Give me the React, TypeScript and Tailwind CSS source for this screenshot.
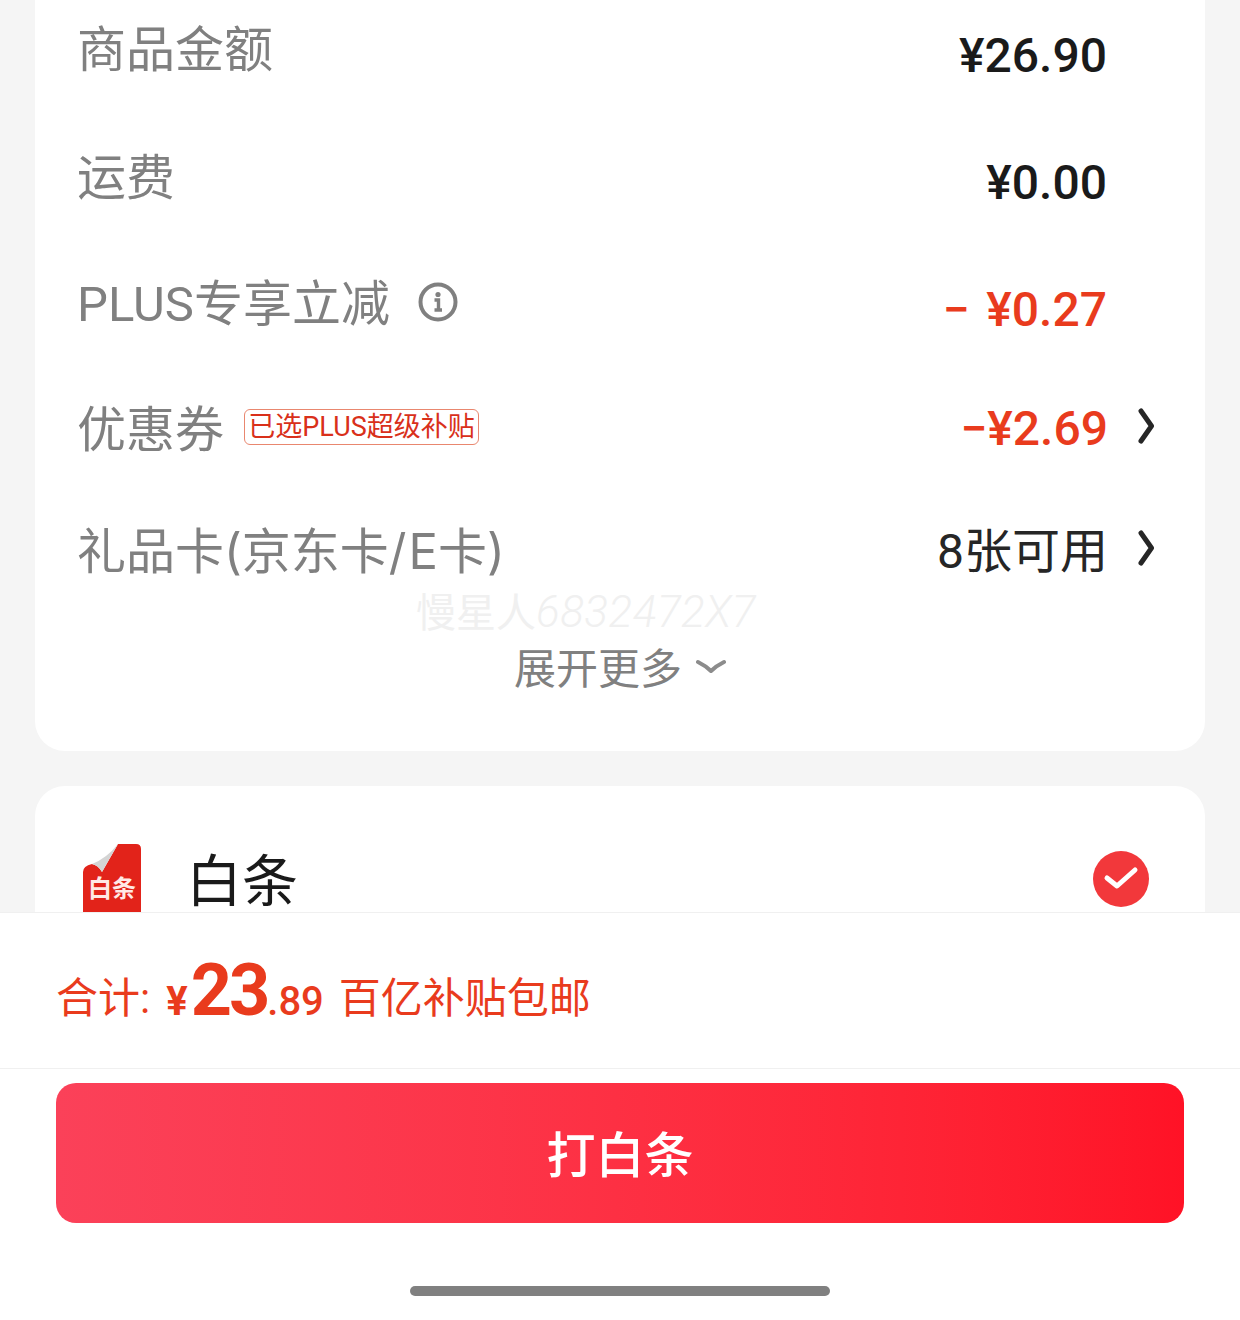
const CJK = 'font-["Roboto","Noto_Sans_CJK_SC",sans-serif]'

function Chevron({ className = '' }: { className?: string }) {
  return (
    <svg width="18" height="36" viewBox="0 0 18 36" fill="none" className={`ml-[30px] shrink-0 ${className}`}>
      <path d="M3 3 L13.5 18 L3 33" stroke="#262626" strokeWidth="5" strokeLinecap="round" strokeLinejoin="round" />
    </svg>
  )
}

function InfoIcon() {
  return (
    <svg width="40" height="40" viewBox="0 0 40 40" fill="none" className="ml-[28px] mt-[-6px]">
      <circle cx="20" cy="20" r="17.5" stroke="#808080" strokeWidth="4" />
      <circle cx="20" cy="12.5" r="2.6" fill="#808080" />
      <path d="M16.5 18 H20.5 V27.5 M16.5 28 H24" stroke="#808080" strokeWidth="3.4" />
    </svg>
  )
}

function BaitiaoLogo() {
  return (
    <svg width="58" height="68" viewBox="0 0 58 68" className="shrink-0">
      <path d="M35 0 H53 Q58 0 58 5 V68 H0 V28 Q0 22 9 20 Q15 21 19 28 Z" fill="#e2231a" />
      <path d="M35 0 L19 28 Q15 21 9 20 Q24 14 35 0 Z" fill="#d4d4d4" />
      <text x="29" y="53" textAnchor="middle" fontSize="24" fontWeight="700" fill="#ffe9e6" fontFamily="Noto Sans CJK SC, sans-serif">白条</text>
    </svg>
  )
}

function Row({ label, value, center }: { label: React.ReactNode; value: React.ReactNode; center: string }) {
  return (
    <div className={`flex items-center justify-between ${center}`}>
      <div className="flex items-center text-[49px] leading-[64px] text-[#808080]">{label}</div>
      {value}
    </div>
  )
}

export default function App() {
  return (
    <div className={`flex h-[1320px] w-[1240px] flex-col overflow-hidden bg-white ${CJK}`}>
      <div className="h-[912px] shrink-0 overflow-hidden bg-[#f5f5f5] px-[35px]">
        <div className="relative mt-[-40px] h-[791px] rounded-[30px] bg-white pl-[42px]">
          <div className="flex flex-col pt-[59px]">
            <Row
              center="h-[64px] mb-[64px]"
              label="商品金额"
              value={<span className="mr-[98px] mt-[10px] text-[48px] font-medium leading-[64px] text-[#1a1a1a]">¥26.90</span>}
            />
            <Row
              center="h-[64px] mb-[62px]"
              label="运费"
              value={<span className="mr-[98px] mt-[8px] text-[48px] font-medium leading-[64px] text-[#1a1a1a]">¥0.00</span>}
            />
            <Row
              center="h-[64px] mb-[62px]"
              label={<>PLUS专享立减<InfoIcon /></>}
              value={
                <span className="mr-[98px] mt-[10px] text-[48px] font-medium leading-[64px] text-[#e93b1d]">
                  <span className="mr-[5px]">−</span>&nbsp;¥0.27
                </span>
              }
            />
            <Row
              center="h-[64px] mb-[57px]"
              label={
                <>
                  优惠券
                  <span className="ml-[20px] mt-[-8px] flex h-[36px] w-[235px] items-center justify-center whitespace-nowrap rounded-[6px] border border-[#e9876f] text-[27px] leading-none text-[#d9301a]">
                    已选PLUS超级补贴
                  </span>
                </>
              }
              value={
                <div className="mr-[49px] mt-[-4px] flex items-center">
                  <span className="text-[48px] font-medium leading-[64px] text-[#e93b1d]">−¥2.69</span>
                  <Chevron className="mt-[-6px]" />
                </div>
              }
            />
            <Row
              center="h-[64px]"
              label={<span className='font-["Inter","Noto_Sans_CJK_SC",sans-serif]'>礼品卡(京东卡/<span className="ml-[2px]">E卡)</span></span>}
              value={
                <div className="mr-[49px] flex items-center">
                  <span className="text-[48px] leading-[64px] text-[#262626]">8张可用</span>
                  <Chevron className="mt-[-8px]" />
                </div>
              }
            />
          </div>

          <div className="absolute left-[381px] top-[626px] flex items-baseline whitespace-nowrap text-[40px] leading-[52px] text-[#f0f0f0]">
            慢星人
            <span className="text-[44px] font-light italic tracking-[0.5px]">6832472X7</span>
          </div>

          <div className="mt-[58px] flex items-center justify-center pr-[42px] text-[42px] leading-[56px] text-[#808080]">
            展开更多
            <svg width="30" height="16" viewBox="0 0 30 16" fill="none" className="ml-[14px] mt-[-6px]">
              <path d="M2 3 Q10 7 15 12 Q20 7 28 3" stroke="#8c8c8c" strokeWidth="4" strokeLinecap="round" strokeLinejoin="round" />
            </svg>
          </div>
        </div>

        <div className="mt-[35px] flex h-[300px] items-start rounded-[30px] bg-white pl-[48px] pr-[56px] pt-[58px]">
          <BaitiaoLogo />
          <span className="ml-[45px] mt-[-4px] text-[56px] leading-[84px] text-[#1a1a1a]">白条</span>
          <svg width="56" height="56" viewBox="0 0 56 56" className="ml-auto mt-[7px]">
            <circle cx="28" cy="28" r="28" fill="#f2383b" />
            <path d="M14 27 L24 35 L42 19" fill="none" stroke="#ffffff" strokeWidth="5" strokeLinecap="round" strokeLinejoin="round" />
          </svg>
        </div>
      </div>

      <div className="flex h-[157px] shrink-0 items-center border-y border-[#f0f0f0] bg-white pl-[56px] pt-[16px] text-[#e93b1d]">
        <span className="text-[42px] leading-none">合计:</span>
        <span className="ml-[16px] mt-[6px] text-[40px] font-bold leading-none">¥</span>
        <span className="ml-[3px] mt-[-16px] text-[72px] font-bold leading-none tracking-[-3px]">23</span>
        <span className="mt-[6px] text-[40px] font-medium leading-none">.89</span>
        <span className="ml-[15px] text-[42px] leading-none">百亿补贴包邮</span>
      </div>

      <div className="flex flex-1 flex-col items-center bg-white px-[56px] pt-[14px]">
        <div className="flex h-[140px] w-full items-center justify-center rounded-[20px] bg-gradient-to-r from-[#fb4159] to-[#ff1226] pt-[8px] text-[49px] font-medium text-white">
          打白条
        </div>
        <div className="mt-[63px] h-[10px] w-[420px] rounded-full bg-[#808080]" />
      </div>
    </div>
  )
}
